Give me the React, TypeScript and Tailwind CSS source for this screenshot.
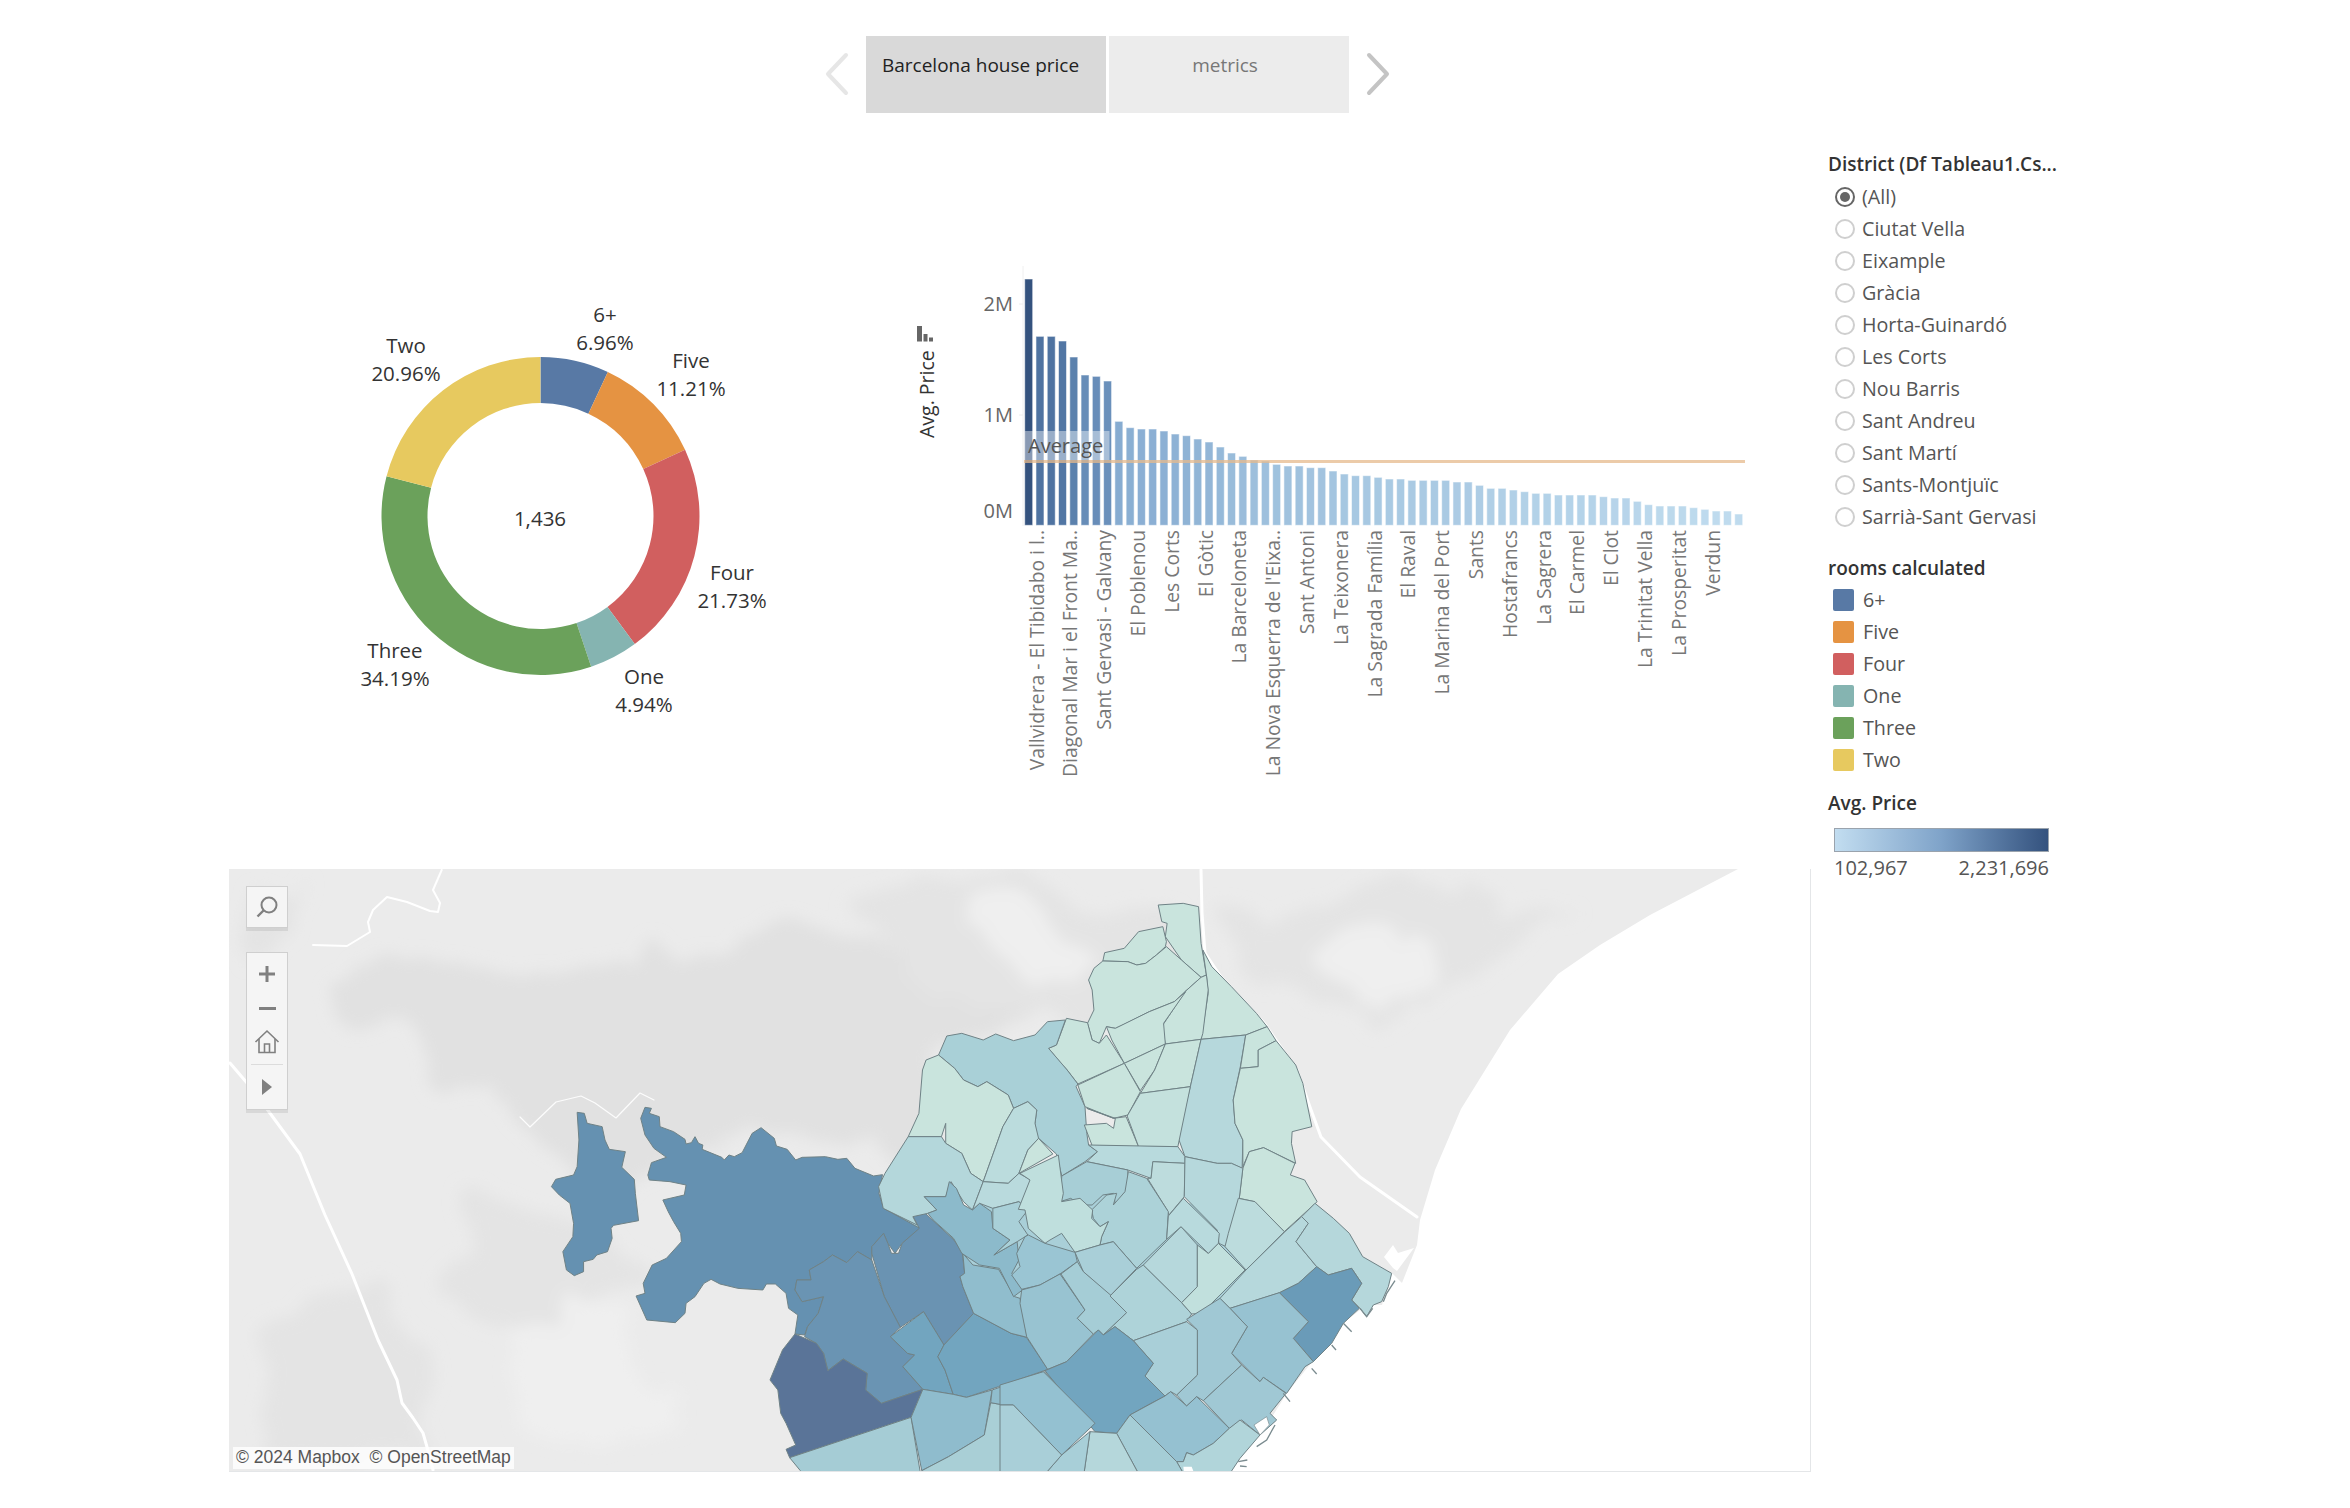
import React from "react";

const tops: number[] = [57,229,229,243,291,345,349,363,484,503,507,507,513,522,527,537,546,561,579,589,600,603,613,618,618,623,623,633,642,647,647,652,657,657,661,661,661,661,666,666,676,685,685,690,695,700,700,705,705,705,705,710,714,714,724,734,738,738,738,743,748,753,753,762];

const stops: [number, number[]][] = [[246,[52,82,126]],[188,[79,116,162]],[145,[106,144,187]],[105,[134,171,209]],[60,[160,194,222]],[15,[191,219,238]]];
function ramp(h: number): string {
  if (h >= stops[0][0]) return "rgb(52,82,126)";
  for (let i = 0; i < stops.length - 1; i++) {
    const [a, ca] = stops[i];
    const [b, cb] = stops[i + 1];
    if (h <= a && h >= b) {
      const t = (a - h) / (a - b);
      return `rgb(${ca.map((c, k) => Math.round(c + (cb[k] - c) * t)).join(",")})`;
    }
  }
  return "rgb(191,219,238)";
}

const barLabels = ["Vallvidrera - El Tibidabo i l..","Diagonal Mar i el Front Ma..","Sant Gervasi - Galvany","El Poblenou","Les Corts","El Gòtic","La Barceloneta","La Nova Esquerra de l'Eixa..","Sant Antoni","La Teixonera","La Sagrada Família","El Raval","La Marina del Port","Sants","Hostafrancs","La Sagrera","El Carmel","El Clot","La Trinitat Vella","La Prosperitat","Verdun"];

const segs = [
  { v: 6.96, c: "#5879a5" },
  { v: 11.21, c: "#e59342" },
  { v: 21.73, c: "#d15f5f" },
  { v: 4.94, c: "#85b4b1" },
  { v: 34.19, c: "#6ba15b" },
  { v: 20.96, c: "#e7c95f" },
];

function arc(cx: number, cy: number, R: number, r: number, a0: number, a1: number) {
  const p = (rad: number, a: number) => `${(cx + rad * Math.sin(a)).toFixed(2)} ${(cy - rad * Math.cos(a)).toFixed(2)}`;
  const large = a1 - a0 > Math.PI ? 1 : 0;
  return `M${p(R, a0)}A${R} ${R} 0 ${large} 1 ${p(R, a1)}L${p(r, a1)}A${r} ${r} 0 ${large} 0 ${p(r, a0)}Z`;
}

const donutLabels: [string, string, number, number][] = [
  ["6+", "6.96%", 605, 315],
  ["Five", "11.21%", 691, 361],
  ["Four", "21.73%", 732, 573],
  ["One", "4.94%", 644, 677],
  ["Three", "34.19%", 395, 651],
  ["Two", "20.96%", 406, 346],
];

function Donut() {
  let acc = 0;
  return (
    <svg width={460} height={460} viewBox="340 280 460 460" className="block">
      {segs.map((s) => {
        const a0 = (acc / 100) * Math.PI * 2;
        acc += s.v;
        const a1 = (acc / 100) * Math.PI * 2;
        return <path key={s.c} d={arc(540.5, 516, 159, 113, a0, a1)} fill={s.c} />;
      })}
      <g fontFamily="'Open Sans', sans-serif" fontSize={20.5} fill="#333" textAnchor="middle">
        {donutLabels.map(([a, b, x, y]) => (
          <g key={a}>
            <text x={x} y={y + 7}>{a}</text>
            <text x={x} y={y + 35}>{b}</text>
          </g>
        ))}
        <text x={540} y={526}>1,436</text>
      </g>
    </svg>
  );
}

function Bars() {
  const base = 525.3;
  return (
    <svg width={860} height={530} viewBox="900 260 860 530" className="block">
      <line x1={1023} y1={266} x2={1023} y2={526} stroke="#f0f0f0" />
      <line x1={1019} y1={304} x2={1023} y2={304} stroke="#eeeeee" />
      <line x1={1019} y1={415} x2={1023} y2={415} stroke="#eeeeee" />
      {tops.map((t, i) => {
        const y = 260 + t / 3;
        const h = base - y;
        return <rect key={i} x={1024.7 + 11.27 * i} y={y} width={8} height={h} fill={ramp(h)} stroke="#ffffff" strokeOpacity={0.55} strokeWidth={1} />;
      })}
      <rect x={1024.5} y={431} width={85} height={29} fill="#ffffff" fillOpacity={0.42} />
      <rect x={1024} y={460} width={721} height={3} fill="#e6b98c" fillOpacity={0.75} />
      <text x={1028} y={453} fontFamily="'Open Sans', sans-serif" fontSize={20} fill="#555">Average</text>
      <g fontFamily="'Open Sans', sans-serif" fontSize={20} fill="#666" textAnchor="end">
        <text x={1013} y={311}>2M</text>
        <text x={1013} y={422}>1M</text>
        <text x={1013} y={518}>0M</text>
      </g>
      <text transform="translate(934 438) rotate(-90)" fontFamily="'Open Sans', sans-serif" fontSize={19.5} fill="#333">Avg. Price</text>
      <g fill="#666">
        <rect x={917} y={326} width={5} height={15.5} />
        <rect x={923.5} y={334} width={4} height={7.5} />
        <rect x={929} y={337.5} width={4} height={4} />
      </g>
      <g fontFamily="'Open Sans', sans-serif" fontSize={19.3} fill="#777" textAnchor="end">
        {barLabels.map((l, i) => (
          <text key={l} transform={`translate(${(1043.5 + 33.8 * i).toFixed(1)} 530) rotate(-90)`}>{l}</text>
        ))}
      </g>
    </svg>
  );
}

type P = [string, string];
const z9: P[] = [
  ["#6591b1","350,82 368,85 362,100 390,110 392,140 430,155 462,178 465,192 480,188 490,170 500,190 512,195 510,208 565,232 572,240 585,225 600,230 622,218 650,160 675,143 712,175 718,198 748,208 772,240 790,232 855,230 890,238 915,235 938,265 990,288 1015,284 1005,340 1018,385 1120,445 1070,490 1050,520 1030,490 1018,460 985,500 985,540 945,515 915,548 875,525 850,545 810,570 815,600 775,600 770,630 790,665 850,650 835,700 805,740 797,765 770,762 778,705 752,685 745,640 715,612 690,612 680,630 610,625 560,612 535,598 515,610 490,650 465,670 462,700 435,728 355,720 325,648 350,640 345,610 370,555 410,535 452,485 450,460 430,425 415,395 400,360 460,345 465,315 420,305 362,300 358,285 368,248 410,232 375,205 350,165 338,115"],
  ["#6a93b2","985,520 1020,650 1065,742 1130,695 1187,795 1270,700 1240,620 1232,590 1245,580 1238,515 1215,480 1165,430 1135,400 1100,408 1118,445 1070,490 1060,520 1040,520 1030,490 1018,460 985,500"],
  ["#6a94b3","985,540 945,515 915,548 875,525 850,545 810,570 815,600 775,600 770,630 790,665 850,650 835,700 805,740 797,770 830,790 850,820 862,872 905,837 972,880 968,930 1012,970 1128,928 1072,860 1105,825 1085,820 1037,770 1065,742 1020,650"],
  ["#5a7498","770,762 830,790 850,820 862,872 905,837 972,880 968,930 1012,970 1128,928 1095,1012 755,1133 745,1108 772,1095 745,1030 730,1000 722,930 700,900 735,810"],
  ["#72a5bf","1130,695 1187,795 1170,830 1190,870 1213,943 1128,928 1072,860 1105,825 1085,820 1037,770"],
  ["#72a5bf","1270,700 1375,760 1418,772 1478,868 1340,920 1250,952 1213,943 1190,870 1170,830 1187,795"],
  ["#a5ccd5","755,1133 1095,1012 1120,1172 1120,1210 785,1210 785,1172"],
  ["#8fbccd","1128,928 1213,943 1250,952 1322,930 1300,1065 1200,1130 1125,1172 1095,1012"],
  ["#a9cfd6","1318,968 1380,980 1510,1122 1475,1172 1475,1210 1125,1210 1125,1172 1200,1130 1300,1065"],
  ["#90bdcd","1240,520 1268,555 1340,568 1385,650 1400,655 1420,772 1375,760 1270,700 1240,620 1232,590 1245,580"],
  ["#90bdcd","1322,930 1468,875 1568,980 1568,1070 1515,1120 1380,980 1318,968"],
  ["#6591b1","160,97 180,100 188,130 230,140 238,180 250,208 295,215 285,262 320,298 323,340 332,422 262,436 255,445 258,475 245,515 215,525 205,538 178,545 178,575 152,587 130,570 120,515 148,470 150,430 140,370 110,345 88,320 100,298 150,285 160,260 165,180"],
];
const z10: P[] = [
  ["#c9e4dd","835,75 905,70 948,80 955,190 970,285 955,292 900,240 855,170 860,130 845,125"],
  ["#c9e4dd","848,140 858,185 855,200 830,225 800,250 775,255 750,245 680,243 685,218 740,205 780,155"],
  ["#c9e4dd","680,243 750,245 775,255 800,250 830,225 858,200 900,240 955,292 910,335 880,365 810,395 745,430 715,445 690,440 670,490 650,480 637,430 655,390 650,330 640,300 655,265"],
  ["#c9e4dd","970,285 975,340 955,478 1080,465 1140,440 1110,400 1040,320 985,260 960,210"],
  ["#c9e4dd","910,335 955,292 970,285 975,330 960,460 955,478 855,492 845,440"],
  ["#c9e4dd","690,440 715,445 810,395 880,365 912,335 850,430 855,492 740,550 705,480"],
  ["#c9e4dd","578,415 637,428 650,480 670,490 690,465 740,550 610,612 580,570 555,540 528,505 550,495"],
  ["#c9e4dd","740,550 855,492 825,570 785,632"],
  ["#c9e4dd","855,492 955,478 925,620 785,640 825,570"],
  ["#b6d8dc","955,478 1080,465 1065,560 1045,660 1050,730 1072,780 1070,865 1040,850 1000,850 910,830 890,770 925,620"],
  ["#c9e4dd","1080,465 1140,440 1165,482 1115,510 1115,560 1065,565"],
  ["#c9e4dd","1165,482 1220,555 1240,610 1265,740 1210,755 1208,790 1220,850 1130,803 1090,815 1072,860 1072,780 1050,730 1045,660 1065,565 1115,560 1115,510"],
  ["#c9e4dd","1072,865 1090,815 1130,803 1218,850 1205,885 1245,900 1280,965 1188,1055 1105,965 1062,955"],
  ["#a9d0d7","243,468 285,460 345,480 380,462 430,482 490,465 525,425 575,420 550,495 528,505 580,570 610,612 605,620 630,680 635,760 640,795 665,815 630,845 565,888 550,822 495,770 490,730 495,690 470,665 430,685 415,645 355,605 330,620 290,600 265,565 220,525"],
  ["#c9e4dd","220,525 265,565 290,600 330,620 355,605 415,645 430,685 400,740 345,905 310,880 285,820 240,790 240,730 228,770 135,770 165,700 175,570 185,540"],
  ["#bbdcdd","430,685 470,665 495,690 490,730 500,775 470,810 445,880 415,910 345,905 400,740"],
  ["#c9e4dd","500,775 540,822 445,880 470,810"],
  ["#c9e4dd","610,615 740,550 785,635 750,705 710,715 630,680"],
  ["#c9e4dd","635,685 710,715 745,710 780,800 650,797 628,735 690,730 710,745 715,715"],
  ["#c4e1dd","785,640 925,620 890,800 780,800 748,708"],
  ["#b8dadd","640,795 890,800 910,830 910,850 820,845 815,895 750,870 635,845 665,815"],
  ["#a7ced6","635,845 750,870 750,925 715,975 710,940 680,945 650,975 620,975 590,955 560,965 565,888"],
  ["#bddcdd","820,845 910,850 908,950 865,1005 860,990 805,895 815,895"],
  ["#b6d8dc","910,830 1000,850 1040,850 1072,865 1062,955 1030,1090 1025,1100 1005,1090 1000,1050 908,950"],
  ["#b4d7db","135,770 228,770 240,790 285,820 310,880 345,905 315,990 290,965 255,905 240,950 180,950 215,990 190,1000 148,1010 160,1035 65,985 52,920 70,880"],
  ["#b9dadd","345,905 415,910 445,880 478,900 470,990 445,965 372,985 335,970 315,990"],
  ["#8cbacb","180,950 240,950 250,905 270,925 290,975 315,990 335,970 368,995 372,1045 420,1080 375,1125 440,1085 445,1140 425,1180 455,1230 430,1250 390,1165 335,1155 285,1120 262,1075 205,1020 190,1000 215,990"],
  ["#a9d0d8","372,985 445,965 470,990 445,1025 470,1065 440,1085 375,1125 420,1080 372,1045"],
];
const z11: P[] = [
  ["#acd2d8","385,125 440,145 505,245 500,328 410,415 340,335 300,345 305,320 325,275 300,290 280,265 275,240 320,195 350,190 340,225 375,185"],
  ["#bfdfdd","175,75 190,190 185,215 240,205 278,240 275,265 300,290 325,275 305,320 300,345 225,367 185,310 150,330 135,340 85,295 75,240 55,238 90,150 60,130"],
  ["#a9cfd8","225,367 300,345 340,335 410,415 330,498 250,425"],
  ["#9ac5d3","85,315 135,340 225,367 232,395 180,432 120,465 65,478 35,435 60,410 50,370 75,320"],
  ["#98c3d1","65,480 120,465 180,432 255,540 232,565 280,612 200,695 143,718 80,620 60,520"],
  ["#a5cdd6","183,432 232,395 250,425 335,498 380,548 310,615 295,600 280,612 232,565 255,540"],
  ["#aed3d9","330,498 410,418 430,405 545,518 575,552 560,575 400,632 345,590 310,615 380,548"],
  ["#b6d8dc","430,405 543,290 592,345 592,470 545,518"],
  ["#c1e0dd","592,345 625,370 655,340 735,420 605,550 575,552 545,518 592,470"],
  ["#b8dadd","500,328 505,258 550,205 658,310 655,340 625,370 543,290"],
  ["#bcdcdd","715,205 765,215 853,305 738,420 675,350 685,310"],
  ["#b6d8dc","855,305 905,260 925,280 888,335 950,410 895,460 840,488 690,535 660,505 738,420"],
  ["#b5d7db","945,220 1000,265 1048,310 1088,380 1175,430 1165,470 1145,515 1120,525 1100,560 1080,535 1055,510 1085,460 1055,415 985,435 950,410 888,335 925,280 905,260"],
  ["#6a9bb8","950,410 985,435 1055,415 1085,460 1055,510 1078,535 1030,580 995,640 940,695 880,625 925,575 838,488 895,460"],
  ["#97c2d1","838,488 925,575 880,625 940,695 915,710 860,790 790,742 780,755 695,670 742,590 690,535"],
  ["#a0c8d4","690,535 742,590 695,670 725,705 610,812 590,800 560,828 530,795 592,735 592,600 560,568 660,505"],
  ["#a9cfd8","400,632 560,575 592,600 592,735 530,795 512,785 495,798 435,738 460,700"],
  ["#72a5bf","295,600 310,615 345,590 400,632 460,700 435,738 495,798 435,830 390,855 350,910 285,905 135,722 200,695"],
  ["#95c1d1","390,855 495,798 512,785 560,828 590,800 688,895 640,940 580,975 560,968 550,995 530,995 410,875"],
  ["#a0c8d4","725,705 780,755 790,742 858,790 810,850 830,870 780,915 725,870 688,895 610,812"],
  ["#b1d5da","688,895 720,870 780,915 720,985 690,1030 550,1030 530,995 550,995 560,968 580,975 640,940"],
  ["#a5cdd6","350,910 390,855 410,875 530,995 550,1030 415,1030"],
  ["#b5d7db","270,905 350,910 415,1030 252,1030"],
  ["#a8cfd8","270,905 252,1030 137,1030 185,975"],
  ["#94c1d1","0,765 130,725 285,880 185,975 40,825 0,825"],
  ["#a9cfd8","0,825 40,825 185,975 137,1030 0,1030"],
];

function Regions({ data }: { data: P[] }) {
  return (
    <>
      {data.map(([c, p], i) => (
        <polygon key={i} points={p} fill={c} stroke="#6f8286" strokeWidth={1} vectorEffect="non-scaling-stroke" strokeLinejoin="round" />
      ))}
    </>
  );
}

function MapCanvas() {
  return (
    <svg width={1583} height={603} viewBox="229 869 1583 603" className="block">
      <defs>
        <filter id="soft" x="-15%" y="-15%" width="130%" height="130%">
          <feTurbulence type="fractalNoise" baseFrequency="0.014" numOctaves={4} seed={7} result="n" />
          <feDisplacementMap in="SourceGraphic" in2="n" scale={60} xChannelSelector="R" yChannelSelector="G" />
          <feGaussianBlur stdDeviation="5" />
        </filter>
      </defs>
      <rect x={229} y={869} width={1583} height={603} fill="#ebebeb" />
      <g transform="scale(1.4987)" filter="url(#soft)">
        <g fill="#e1e1e1">
          <polygon points="215,650 290,635 340,650 400,650 470,625 560,620 600,640 690,620 700,680 620,710 620,790 560,770 500,740 430,780 400,745 300,720 230,690" />
          <polygon points="320,700 440,730 480,760 420,790 340,760" />
        </g>
        <g fill="#e4e4e4">
          <polygon points="830,600 990,590 1060,600 980,650 900,690 840,660" />
          <polygon points="160,590 205,590 190,620 155,640" />
          <polygon points="300,790 400,810 440,850 370,900 290,870" />
          <polygon points="560,600 700,590 790,600 800,660 700,690 620,660" />
          <polygon points="160,880 260,860 300,960 180,970" />
        </g>
        <g fill="#efefef">
          <polygon points="640,610 700,600 730,650 680,660" />
          <polygon points="880,640 940,620 950,660 900,680" />
          <polygon points="340,880 430,880 440,960 350,960" />
        </g>
      </g>
      {/* roads */}
      <g fill="none" stroke="#ffffff" strokeLinecap="round" strokeLinejoin="round">
        <polyline strokeWidth={2} points="441.7,870 433,890 440,903 438,912 430,911 407,902 387,897 373,910 368,922 370,932 347,946 313,945" />
        <polyline strokeWidth={3} points="230,1063 253,1090 275,1120 300,1154 325,1215 352,1274 378,1340 397,1380 402,1403 413,1418 423,1433 427,1447 433,1470" />
        <polyline strokeWidth={1.2} strokeOpacity={0.9} points="520,1117 530,1127 556,1102 581,1096 595,1103 616,1118 640,1093 654,1100" />
        <polyline strokeWidth={3} points="1201,870 1202,913 1205,953 1221,977 1264,1023 1297,1070 1310,1107 1321,1137 1360,1177 1417,1217" />
        <polygon fill="#ffffff" stroke="none" points="1384,1257 1393,1245 1398,1253 1414,1248 1397,1271 1393,1268" />
      </g>
      {/* sea */}
      <polygon fill="#ffffff" points="1738,869 1650,915 1600,945 1558,974 1510,1030 1461,1109 1435,1170 1420,1220 1417,1245 1402,1283 1392,1273 1388,1287 1382,1305 1373,1305 1360,1310 1343,1323 1332,1343 1312,1362 1287,1393 1270,1420 1277,1420 1260,1435 1240,1458 1230,1472 1812,1472 1812,869" />
      <g transform="translate(860 880) scale(0.35714 0.33333)">
        <polygon points="65,985 200,1020 600,900 1060,1000 1200,1100 1300,1290 800,1290 300,1290 150,1040" fill="#a9cfd8" />
      </g>
      <g transform="translate(520 1080) scale(0.35714 0.33333)"><Regions data={z9} /></g>
      <g transform="translate(860 880) scale(0.35714 0.33333)"><Regions data={z10} /></g>
      <g transform="translate(1000 1130) scale(0.33333)">
        <Regions data={z11} />
        <g fill="none" stroke="#7a8b8f" strokeWidth={4}>
          <polyline points="1030,580 1055,605" />
          <polyline points="995,645 1008,660" />
          <polyline points="935,715 950,732" />
          <polyline points="850,790 870,815" />
          <polyline points="1080,535 1100,560 1118,535" />
          <polyline points="1150,515 1160,490 1185,452" />
          <polyline points="770,950 800,930 825,885" />
          <polyline points="715,995 742,990" />
          <polyline points="720,1008 740,1010" />
        </g>
        <polygon points="762,885 800,860 808,885 780,915" fill="#ffffff" stroke="#7a8b8f" strokeWidth={2} />
        <polygon points="550,1010 575,1010 582,1028 552,1028" fill="#ffffff" />
      </g>
    </svg>
  );
}

function MapControls() {
  return (
    <>
      <div className="absolute left-[17px] top-[17px] w-[42px] h-[42px] bg-[#f5f5f5] border border-[#cfcfcf] shadow-[0_3px_0_rgba(0,0,0,0.08)] flex items-center justify-center">
        <svg width={40} height={40} viewBox="0 0 40 40" fill="none" stroke="#808080" strokeWidth={2}>
          <circle cx={22} cy={18} r={7.5} />
          <line x1={16.5} y1={23.5} x2={10.5} y2={29.5} strokeWidth={2.4} />
        </svg>
      </div>
      <div className="absolute left-[17px] top-[83px] w-[42px] h-[158px] bg-[#f5f5f5] border border-[#cfcfcf] shadow-[0_3px_0_rgba(0,0,0,0.08)] flex flex-col items-center pt-[4px]">
        <div className="h-[34px] flex items-center justify-center">
          <svg width={18} height={18} viewBox="0 0 18 18" stroke="#808080" strokeWidth={3}>
            <line x1={1} y1={9} x2={17} y2={9} />
            <line x1={9} y1={1} x2={9} y2={17} />
          </svg>
        </div>
        <div className="h-[34px] flex items-center justify-center">
          <div className="w-[17px] h-[3px] bg-[#808080]" />
        </div>
        <div className="h-[33px] flex items-center justify-center">
          <svg width={26} height={26} viewBox="0 0 26 26" fill="none" stroke="#808080" strokeWidth={1.6}>
            <path d="M1.5 13 L13 2 L24.5 13" />
            <path d="M5 10 V23.5 H21 V10" />
            <path d="M10.5 23.5 V15 H15.5 V23.5" />
          </svg>
        </div>
        <div className="mt-[6px] w-[32px] h-px bg-[#dcdcdc]" />
        <div className="flex-1 flex items-center justify-center">
          <svg width={12} height={16} viewBox="0 0 12 16" fill="#808080"><polygon points="1,0 11,8 1,16" /></svg>
        </div>
      </div>
      <div className="absolute left-[4px] top-[578px] h-[22px] w-[281px] bg-white/80 pl-[3px] flex items-center font-['Liberation_Sans',sans-serif] text-[17.5px] leading-none text-[#555] whitespace-pre">
        © 2024 Mapbox  © OpenStreetMap
      </div>
    </>
  );
}

const districts = ["(All)","Ciutat Vella","Eixample","Gràcia","Horta-Guinardó","Les Corts","Nou Barris","Sant Andreu","Sant Martí","Sants-Montjuïc","Sarrià-Sant Gervasi"];
const rooms: [string, string][] = [["6+","bg-[#5879a5]"],["Five","bg-[#e59342]"],["Four","bg-[#d15f5f]"],["One","bg-[#85b4b1]"],["Three","bg-[#6ba15b]"],["Two","bg-[#e7c95f]"]];

function Sidebar() {
  return (
    <aside className="ml-[17px] mt-[35px] w-[260px] font-['Open_Sans',sans-serif] text-[19.7px] text-[#555]">
      <div className="h-[33px] flex items-center font-semibold text-[#333] text-[19px] whitespace-nowrap">District (Df Tableau1.Cs...</div>
      {districts.map((d, i) => (
        <div key={d} className="h-[32px] flex items-center pl-[7px] gap-[7px]">
          {i === 0 ? (
            <span className="w-[20px] h-[20px] rounded-full border-2 border-[#666] flex items-center justify-center">
              <span className="w-[10px] h-[10px] rounded-full bg-[#666]" />
            </span>
          ) : (
            <span className="w-[20px] h-[20px] rounded-full border-2 border-[#cfcfcf]" />
          )}
          <span>{d}</span>
        </div>
      ))}
      <div className="mt-[19px] h-[32px] flex items-center font-semibold text-[#333] text-[19px]">rooms calculated</div>
      {rooms.map(([n, c]) => (
        <div key={n} className="h-[32px] flex items-center pl-[5px] gap-[9px]">
          <span className={`w-[21px] h-[22px] rounded-[2px] ${c}`} />
          <span>{n}</span>
        </div>
      ))}
      <div className="mt-[11px] h-[32px] flex items-center font-semibold text-[#333] text-[19px]">Avg. Price</div>
      <div className="mt-[9px] ml-[6px] w-[215px] h-[24px] border border-[#9aa3ad] bg-gradient-to-r from-[#c2ddf0] via-[#7fa3c9] to-[#34527e]" />
      <div className="mt-[4px] ml-[6px] w-[215px] h-[24px] flex items-center justify-between text-[20px]">
        <span>102,967</span>
        <span>2,231,696</span>
      </div>
    </aside>
  );
}

function Chevron({ dir, color }: { dir: "l" | "r"; color: string }) {
  return (
    <svg width={24} height={44} viewBox="0 0 24 44" fill="none" stroke={color} strokeWidth={4} strokeLinecap="round" strokeLinejoin="round" className="block mt-[16px]">
      <polyline points={dir === "l" ? "21,3 3,22 21,41" : "3,3 21,22 3,41"} />
    </svg>
  );
}

export default function App() {
  return (
    <div className="w-[2350px] h-[1508px] bg-white overflow-hidden">
      <header className="h-[113px] pt-[36px] pl-[825px] flex font-['Open_Sans',sans-serif] text-[19px]">
        <Chevron dir="l" color="#e6e6e6" />
        <div className="ml-[17px] w-[240px] h-[77px] bg-[#d9d9d9] pl-[16px] pt-[17px] leading-[24px] text-[#222]">Barcelona house price</div>
        <div className="ml-[3px] w-[240px] h-[77px] bg-[#ececec] pr-[8px] pt-[17px] leading-[24px] text-center text-[#777]">metrics</div>
        <div className="ml-[17px]"><Chevron dir="r" color="#c4c4c4" /></div>
      </header>
      <div className="flex pl-[229px]">
        <main className="w-[1582px] flex flex-col">
          <div className="h-[756px] flex items-start">
            <div className="ml-[111px] mt-[167px]"><Donut /></div>
            <div className="ml-[100px] mt-[147px]"><Bars /></div>
          </div>
          <div className="relative w-[1582px] h-[603px] overflow-hidden border-r border-b border-[#e4e6e8]">
            <MapCanvas />
            <MapControls />
          </div>
        </main>
        <Sidebar />
      </div>
    </div>
  );
}
